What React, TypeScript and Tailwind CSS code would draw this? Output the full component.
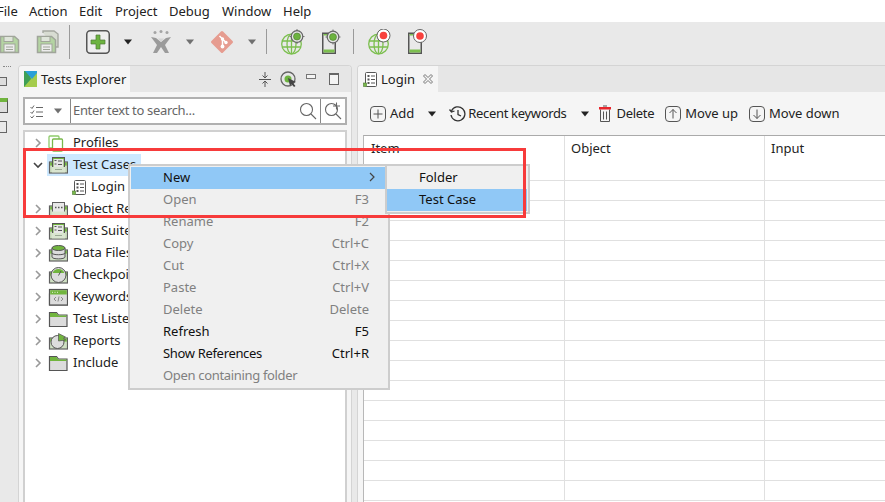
import { FC, ReactNode } from "react"

const Arrow: FC<{ grey?: boolean; className?: string }> = ({ grey, className = "" }) => (
  <svg width="10" height="6" viewBox="0 0 10 6" className={className}>
    <path d="M1 0.5h8L5 5.5z" fill={grey ? "#707070" : "#222"} />
  </svg>
)

const SaveIcon: FC<{ multi?: boolean }> = ({ multi }) => (
  <svg width="24" height="24" viewBox="0 0 24 24">
    {multi && <path d="M7 3V1h11l4 3v13h-2" fill="#d8dcd2" stroke="#a5a8a0" strokeWidth="1.4" />}
    <path d="M1.500 6.500h14l4 3.500v12.500h-18z" fill="#b4d4a2" stroke="#a0a59a" strokeWidth="1.5" />
    <rect x="5" y="6.500" width="9" height="5" fill="#dfe5da" stroke="#a0a59a" />
    <rect x="5" y="14" width="11" height="8" fill="#ececec" stroke="#a0a59a" />
    <path d="M7 17h7M7 19.500h7" stroke="#a0a59a" />
  </svg>
)

const PlusBox: FC = () => (
  <svg width="24" height="24" viewBox="0 0 24 24">
    <rect x="0.750" y="0.750" width="22.500" height="22.500" rx="3.500" fill="#eee" stroke="#555" strokeWidth="1.500" />
    <path d="M10 5h4v5h5v4h-5v5h-4v-5H5v-4h5z" fill="#6cb33f" stroke="#4f7a35" strokeWidth="0.700" />
  </svg>
)

const JenkinsIcon: FC = () => (
  <svg width="22" height="24" viewBox="0 0 22 24">
    <circle cx="5" cy="2.500" r="1.500" fill="#a4a4a4" />
    <circle cx="11" cy="1.500" r="1.500" fill="#a4a4a4" />
    <circle cx="17" cy="2.500" r="1.500" fill="#a4a4a4" />
    <path d="M1 7l5 1 5 4 5-4 5-1-6 8 4 8h-4l-4-6-4 6H3l4-8z" fill="#9b9b9b" />
    <path d="M8 8.500h6l-3 3.500z" fill="#d5d5d5" />
  </svg>
)

const GitIcon: FC = () => (
  <svg width="24" height="24" viewBox="0 0 24 24">
    <rect x="3.800" y="3.800" width="16.400" height="16.400" rx="1.500" transform="rotate(45 12 12)" fill="#e69c90" />
    <path d="M9.500 6l3 3v8M12.500 9l3.500 3.500" stroke="#fff" strokeWidth="1.500" fill="none" />
    <circle cx="12.500" cy="9" r="1.700" fill="#fff" />
    <circle cx="12.500" cy="16.500" r="1.900" fill="#fff" />
    <circle cx="16" cy="12.500" r="1.700" fill="#fff" />
  </svg>
)

const Badge: FC<{ red?: boolean; cx: number; cy: number }> = ({ red, cx, cy }) =>
  red ? (
    <g>
      <circle cx={cx} cy={cy} r="6.500" fill="#fff" stroke="#666" strokeWidth="1" />
      <circle cx={cx} cy={cy} r="3.800" fill="#f8413d" />
    </g>
  ) : (
    <g>
      <path d={`M${cx - 7.500} ${cy}h15M${cx} ${cy - 7.500}v15`} stroke="#777" strokeWidth="1" />
      <circle cx={cx} cy={cy} r="5.800" fill="#e4e4e4" stroke="#666" strokeWidth="1.200" />
      <circle cx={cx} cy={cy} r="3.500" fill="#6cb33f" stroke="#4c7b2d" strokeWidth="0.600" />
    </g>
  )

const GlobeIcon: FC<{ red?: boolean }> = ({ red }) => (
  <svg width="26" height="26" viewBox="0 0 26 26">
    <g fill="none" stroke="#7cbf4f" strokeWidth="1.300">
      <circle cx="11.500" cy="15" r="9.800" />
      <ellipse cx="11.500" cy="15" rx="4.500" ry="9.800" />
      <path d="M11.500 5.200v19.600M2.200 12h18.600M2.200 18h18.600" />
    </g>
    <Badge red={red} cx={red ? 16.500 : 17} cy={red ? 6.500 : 7.500} />
  </svg>
)

const PhoneIcon: FC<{ red?: boolean }> = ({ red }) => (
  <svg width="26" height="26" viewBox="0 0 26 26">
    <rect x="0.750" y="4.250" width="12.500" height="20" fill="none" stroke="#555" strokeWidth="1.500" />
    <rect x="1.500" y="20.500" width="11" height="3" fill="#7cbf4f" />
    <rect x="1.500" y="5" width="6" height="1.500" fill="#7cbf4f" />
    <Badge red={red} cx={red ? 12 : 11} cy={red ? 7 : 8} />
  </svg>
)

const Divider: FC<{ className: string }> = ({ className }) => <div className={`w-px bg-[#9a9a9a] ${className}`} />

const ExplorerLogo: FC = () => (
  <svg width="13" height="16" viewBox="0 0 13 16">
    <rect width="13" height="16" fill="#a4cc4c" />
    <path d="M0 16V0h4l3 8z" fill="#3e9f55" />
    <path d="M1 0h12v2L8 8z" fill="#2a9fd8" />
  </svg>
)

const MagnifierIcon: FC<{ plus?: boolean }> = ({ plus }) => (
  <svg width="18" height="18" viewBox="0 0 18 18" fill="none" stroke="#666" strokeWidth="1.100">
    <circle cx="7.500" cy="7.500" r="6" />
    <path d="M12 12l5 5" />
    {plus && <path d="M9 4h7M12.500 0.500v7" />}
  </svg>
)

const ListIcon: FC = () => (
  <svg width="14" height="15" viewBox="0 0 14 15">
    <rect x="2.500" y="0.500" width="11" height="14" rx="1" fill="#fff" stroke="#555" />
    <rect x="0.500" y="11" width="3" height="3.500" fill="#79b84c" stroke="#4d7a30" strokeWidth="0.600" />
    <path d="M8 4h4M8 7.500h4M8 11h4" stroke="#555" />
    <path d="M4.500 3h2v2h-2zM4.500 6.500h2v2h-2zM4.500 10h2v2h-2z" fill="#555" />
  </svg>
)

type FolderKind = "cases" | "object" | "data" | "check" | "keyword" | "plain" | "report"

const FolderIcon: FC<{ kind: FolderKind }> = ({ kind }) => {
  if (kind === "plain") {
    return (
      <svg width="20" height="18" viewBox="0 0 20 18">
        <path d="M1.500 16.500V2.500h7l2 2.500h8.500v11.500z" fill="#dcdcdc" stroke="#555" strokeWidth="1.200" />
        <path d="M2 3h6.300l2 2.500H18.500V7H2z" fill="#71b53e" />
      </svg>
    )
  }
  return (
    <svg width="20" height="18" viewBox="0 0 20 18">
      <rect x="1.500" y="6" width="18" height="11" fill="#cfe0c3" stroke="#606060" strokeWidth="1.200" />
      <rect x="2.200" y="6.600" width="16.600" height="3" fill="#71b53e" />
      {kind === "cases" && (
        <g>
          <rect x="4.500" y="1.500" width="12" height="10" fill="#71b53e" stroke="#555" />
          <rect x="5.500" y="3" width="10" height="8" fill="#e6e6e6" />
          <path d="M6.500 4.500h2M6.500 8h2M10 5h4M10 8.500h4" stroke="#555" strokeWidth="1.100" />
          <rect x="4" y="11" width="13" height="5.400" fill="#d9e5d0" />
          <path d="M7 13.500h7" stroke="#9aa893" />
        </g>
      )}
      {kind === "object" && (
        <g>
          <rect x="4.500" y="2.500" width="12" height="12" fill="#e8e8e8" stroke="#606060" />
          <path d="M7 7.500h1.500M10 7.500h1.500M13 7.500h1.500" stroke="#555" strokeWidth="1.300" />
          <rect x="4" y="11.500" width="13" height="4.900" fill="#d9e5d0" />
        </g>
      )}
      {kind === "data" && (
        <g>
          <path d="M4 4v9c0 2.500 13 2.500 13 0V4z" fill="#dcdcdc" stroke="#555" />
          <ellipse cx="10.500" cy="4" rx="6.500" ry="2.500" fill="#71b53e" stroke="#555" />
          <path d="M4 9c0 2.300 13 2.300 13 0" fill="none" stroke="#555" />
        </g>
      )}
      {kind === "check" && (
        <g>
          <circle cx="10.500" cy="9" r="7.500" fill="#dcdcdc" stroke="#555" />
          <path d="M4.500 7a6.500 6.500 0 0 1 12 0z" fill="#71b53e" />
          <path d="M10.500 9.500L13 5" stroke="#555" />
        </g>
      )}
      {kind === "keyword" && (
        <g>
          <rect x="1.500" y="1.500" width="18" height="15.500" fill="#dcdcdc" stroke="#555" strokeWidth="1.200" />
          <rect x="2.200" y="2.200" width="16.600" height="4.300" fill="#71b53e" />
          <path d="M4 4.300h1M6.500 4.300h1M9 4.300h1" stroke="#e8f2dd" />
          <path d="M8 9l-2 2 2 2M13 9l2 2-2 2M11 8.500l-1 5" stroke="#8a8a8a" fill="none" />
        </g>
      )}
      {kind === "report" && (
        <g>
          <circle cx="9.500" cy="10" r="6.500" fill="#dcdcdc" stroke="#555" />
          <path d="M10.500 9V1.500l7 3.500-2 1 2 2z" fill="#71b53e" stroke="#555" strokeWidth="0.700" />
        </g>
      )}
    </svg>
  )
}

const ProfileIcon: FC = () => (
  <svg width="16" height="17" viewBox="0 0 16 17" fill="none">
    <rect x="1" y="1" width="10" height="12" rx="1" stroke="#8ecb6b" strokeWidth="1.300" />
    <rect x="4.500" y="4" width="10" height="12" rx="1" fill="#fff" stroke="#79b84c" strokeWidth="1.300" />
  </svg>
)

const Chevron: FC<{ open?: boolean }> = ({ open }) => (
  <svg width="10" height="10" viewBox="0 0 10 10" fill="none" stroke={open ? "#444" : "#999"} strokeWidth="1.600">
    {open ? <path d="M1 3l4 4 4-4" /> : <path d="M3 1l4 4-4 4" />}
  </svg>
)

const TreeRow: FC<{ label: string; icon: ReactNode; open?: boolean; selected?: boolean }> = ({ label, icon, open, selected }) => (
  <div className="flex h-[22px] items-center">
    <div className="flex w-[22px] justify-center pl-[3px]">
      <Chevron open={open} />
    </div>
    <div className={`flex h-[22px] items-center pl-[1px] pr-[5px] ${selected ? "bg-[#cce8ff]" : ""}`}>
      <div className="flex w-[25px] justify-start">{icon}</div>
      <span className="whitespace-nowrap pb-[2px]">{label}</span>
    </div>
  </div>
)

const CircleBtn: FC<{ d: string }> = ({ d }) => (
  <svg width="16" height="16" viewBox="0 0 16 16" fill="none" stroke="#555" strokeWidth="1">
    <rect x="0.500" y="0.500" width="15" height="15" rx="3.500" />
    <path d={d} />
  </svg>
)

const ClockIcon: FC = () => (
  <svg width="17" height="16" viewBox="0 0 17 16" fill="none" stroke="#333" strokeWidth="1.300">
    <path d="M2.500 5A7 7 0 1 1 2 9" />
    <path d="M0.500 3.500L2.500 6l3-1" />
    <path d="M9 4v4.500l3 1.500" />
  </svg>
)

const TrashIcon: FC = () => (
  <svg width="12" height="17" viewBox="0 0 12 17" fill="none" stroke="#555" strokeWidth="1">
    <path d="M4 1h4" />
    <path d="M1.500 4.500v12h9v-12M4.500 6.500v8M7.500 6.500v8" />
    <rect x="0" y="2" width="12" height="2.500" fill="#e8252b" stroke="none" />
  </svg>
)

const MenuRow: FC<{ label: string; keys?: string; enabled?: boolean; active?: boolean; more?: boolean; tight?: boolean }> = ({ label, keys, enabled, active, more, tight }) => (
  <div className={`flex h-[22px] items-center pb-[2px] pl-[32px] pr-[18px] ${active ? "bg-[#90c8f6]" : ""} ${enabled ? "text-[#111]" : "text-[#808080]"}`}>
    <span className={`flex-1 whitespace-nowrap ${tight ? "tracking-[-0.33px]" : ""}`}>{label}</span>
    {keys && <span>{keys}</span>}
    {more && (
      <svg width="6" height="10" viewBox="0 0 6 10" fill="none" stroke="#444" strokeWidth="1.200" className="mr-[-6px]">
        <path d="M1 1l4 4-4 4" />
      </svg>
    )}
  </div>
)

const menuItems = ["File", "Action", "Edit", "Project", "Debug", "Window", "Help"]
const menuWidths = ["w-[32px]", "w-[50px]", "w-[36px]", "w-[54px]", "w-[53px]", "w-[61px]", "w-[40px]"]

const tree: { label: string; kind: FolderKind }[] = [
  { label: "Object Repository", kind: "object" },
  { label: "Test Suites", kind: "cases" },
  { label: "Data Files", kind: "data" },
  { label: "Checkpoints", kind: "check" },
  { label: "Keywords", kind: "keyword" },
  { label: "Test Listeners", kind: "plain" },
  { label: "Reports", kind: "report" },
  { label: "Include", kind: "plain" },
]

const rows = Array.from({ length: 16 }, (_, i) => i)

const App: FC = () => {
  return (
    <div className="relative flex h-[502px] w-[885px] flex-col overflow-hidden bg-[#e9e9e9] font-['Noto_Sans',sans-serif] text-[13px] leading-none text-[#222]">
      {/* menu bar */}
      <div className="ml-[-3px] flex h-[22px] shrink-0 items-center bg-white">
        {menuItems.map((m, i) => (
          <span key={m} className={menuWidths[i]}>{m}</span>
        ))}
      </div>

      {/* main toolbar */}
      <div className="flex h-[43px] shrink-0 items-center pb-[4px]">
        <div className="ml-[-1px]"><SaveIcon /></div>
        <div className="ml-[13px]"><SaveIcon multi /></div>
        <Divider className="ml-[9px] h-[34px]" />
        <div className="ml-[16px]"><PlusBox /></div>
        <Arrow className="ml-[13px]" />
        <div className="ml-[17px]"><JenkinsIcon /></div>
        <Arrow grey className="ml-[13px]" />
        <div className="ml-[15px]"><GitIcon /></div>
        <Arrow grey className="ml-[13px]" />
        <Divider className="ml-[9px] h-[25px]" />
        <div className="ml-[13px]"><GlobeIcon /></div>
        <div className="ml-[16px]"><PhoneIcon /></div>
        <Divider className="ml-[5px] h-[25px]" />
        <div className="ml-[13px]"><GlobeIcon red /></div>
        <div className="ml-[15px]"><PhoneIcon red /></div>
      </div>

      {/* panels */}
      <div className="flex min-h-0 flex-1">
        <div className="relative w-[18px] shrink-0">
          <div className="absolute left-[-3px] top-[1px] flex flex-col">
            <div className="ml-[6px] h-[1px] w-[8px] border-t border-dotted border-[#888]" />
            <div className="mt-[10px] h-[9px] w-[10px] border border-[#666] bg-[#ddd]" />
            <div className="mt-[12px] h-[15px] w-[11px] border border-[#555] border-t-[4px] border-t-[#71b53e] bg-[#ddd]" />
            <div className="mt-[8px] h-[12px] w-[10px] border border-[#666]" />
          </div>
        </div>

        {/* tests explorer */}
        <div className="flex w-[334px] shrink-0 flex-col overflow-hidden rounded-t-[4px] border border-b-0 border-[#d4d4d4] bg-[#f5f5f5]">
          <div className="flex h-[26px] shrink-0 items-center bg-[#e6e6e6]">
            <div className="flex h-full w-[111px] items-center bg-[#f5f5f5] pl-[5px]">
              <ExplorerLogo />
              <span className="ml-[4px] whitespace-nowrap">Tests Explorer</span>
            </div>
            <div className="ml-auto flex items-center pr-[12px]">
              <svg width="12" height="15" viewBox="0 0 12 15" fill="none" stroke="#555" strokeWidth="1">
                <path d="M0 7.500h12M6 0v6M6 9v6M3.500 3.500L6 6l2.500-2.500M3.500 11.500L6 9l2.500 2.500" />
              </svg>
              <svg width="17" height="17" viewBox="0 0 17 17" className="ml-[9px]">
                <circle cx="8" cy="8" r="7" fill="none" stroke="#666" strokeWidth="1.300" />
                <circle cx="8" cy="8" r="3.500" fill="#6cb33f" />
                <path d="M8 7l8 4-3 1 2.500 3-1.500 1-2.500-3-1.500 2z" fill="#444" />
              </svg>
              <div className="mb-[5px] ml-[9px] h-[5px] w-[10px] border border-[#777] bg-[#f4f4f4]" />
              <div className="ml-[13px] h-[12px] w-[10px] border border-[#666] border-t-[2px] bg-[#f4f4f4]" />
            </div>
          </div>

          <div className="flex min-h-0 flex-1 flex-col px-[4px] pt-[5px]">
            {/* search */}
            <div className="flex h-[28px] shrink-0 items-center border-2 border-[#b0b0b0] bg-white">
              <svg width="13" height="13" viewBox="0 0 13 13" fill="none" stroke="#666" className="ml-[5px]">
                <path d="M0.500 2l1.500 1.500L4 0.500M0.500 7L2 8.500 4 5.500M0.500 11.500L2 13l2-2.500M6 2.500h7M6 7h7M6 11.500h7" />
              </svg>
              <Arrow grey className="ml-[10px]" />
              <div className="ml-[7px] h-[24px] w-px bg-[#888]" />
              <span className="ml-[2px] flex-1 whitespace-nowrap pb-[2px] tracking-[-0.33px] text-[#666]">Enter text to search...</span>
              <MagnifierIcon />
              <div className="mx-[3px] h-[24px] w-px bg-[#888]" />
              <div className="mr-[3px]"><MagnifierIcon plus /></div>
            </div>

            {/* tree */}
            <div className="mt-[5px] min-h-0 flex-1 border-2 border-b-0 border-[#d0d0d0] bg-white">
              <TreeRow label="Profiles" icon={<ProfileIcon />} />
              <TreeRow label="Test Cases" open selected icon={<FolderIcon kind="cases" />} />
              <div className="flex h-[22px] items-center pl-[47px]">
                <div className="w-[19px]"><ListIcon /></div>
                <span className="pb-[2px]">Login</span>
              </div>
              {tree.map((t) => (
                <TreeRow key={t.label} label={t.label} icon={<FolderIcon kind={t.kind} />} />
              ))}
            </div>
          </div>
        </div>

        {/* editor */}
        <div className="ml-[5px] flex min-w-0 flex-1 flex-col overflow-hidden rounded-tl-[4px] border-l border-t border-[#d4d4d4] bg-[#f5f5f5]">
          <div className="flex h-[26px] shrink-0 bg-[#e6e6e6]">
            <div className="flex h-full w-[80px] items-center bg-[#f5f5f5] pl-[5px]">
              <ListIcon />
              <span className="ml-[4px]">Login</span>
              <svg width="10" height="10" viewBox="0 0 10 10" fill="none" stroke="#777" className="ml-[8px]">
                <path d="M2 0.500L5 3.500 8 0.500 9.500 2 6.500 5l3 3L8 9.500l-3-3-3 3L0.500 8l3-3-3-3z" />
              </svg>
            </div>
          </div>

          <div className="flex h-[43px] shrink-0 items-center pl-[12px]">
            <CircleBtn d="M8 3.500v9M3.500 8h9" />
            <span className="ml-[4px]">Add</span>
            <Arrow className="ml-[13px]" />
            <div className="ml-[12px]"><ClockIcon /></div>
            <span className="ml-[2px] whitespace-nowrap tracking-[-0.33px]">Recent keywords</span>
            <Arrow className="ml-[13px]" />
            <div className="ml-[9px]"><TrashIcon /></div>
            <span className="ml-[6px] tracking-[-0.3px]">Delete</span>
            <div className="ml-[11px]"><CircleBtn d="M8 12.500v-9M4.500 7L8 3.500 11.500 7" /></div>
            <span className="ml-[4px] whitespace-nowrap">Move up</span>
            <div className="ml-[11px]"><CircleBtn d="M8 3.500v9M4.500 9L8 12.500 11.500 9" /></div>
            <span className="ml-[4px] whitespace-nowrap">Move down</span>
          </div>

          <div className="ml-[5px] min-h-0 flex-1 border-l border-t border-l-[#b8b8b8] border-t-[#aaaaaa] bg-white">
            <div className="grid h-[45px] grid-cols-[201px_200px_1fr] border-b border-[#e0e0e0]">
              <div className="border-r border-[#e0e0e0] pl-[7px] pt-[6px]">Item</div>
              <div className="border-r border-[#e0e0e0] pl-[6px] pt-[6px]">Object</div>
              <div className="pl-[6px] pt-[6px]">Input</div>
            </div>
            {rows.map((r) => (
              <div key={r} className="grid h-[20px] grid-cols-[201px_200px_1fr] border-b border-[#e0e0e0]">
                <div className="border-r border-[#e0e0e0]" />
                <div className="border-r border-[#e0e0e0]" />
                <div />
              </div>
            ))}
          </div>
        </div>
      </div>

      {/* context menu */}
      <div className="absolute left-[128px] top-[164px] w-[262px] border-2 border-[#cdcdcd] bg-[#f0f0f0] p-[1px]">
        <MenuRow label="New" enabled active more />
        <MenuRow label="Open" keys="F3" />
        <MenuRow label="Rename" keys="F2" />
        <MenuRow label="Copy" keys="Ctrl+C" />
        <MenuRow label="Cut" keys="Ctrl+X" />
        <MenuRow label="Paste" keys="Ctrl+V" />
        <MenuRow label="Delete" keys="Delete" />
        <MenuRow label="Refresh" keys="F5" enabled />
        <MenuRow label="Show References" keys="Ctrl+R" enabled tight />
        <MenuRow label="Open containing folder" tight />
      </div>

      {/* submenu */}
      <div className="absolute left-[385px] top-[164px] w-[145px] border-2 border-[#cdcdcd] bg-[#f0f0f0] py-[1px] pr-[1px]">
        <MenuRow label="Folder" enabled />
        <MenuRow label="Test Case" enabled active />
      </div>

      {/* red annotation */}
      <div className="pointer-events-none absolute left-[23px] top-[148px] h-[70px] w-[503px] border-[3px] border-[#f73b3b]" />
    </div>
  )
}

export default App
